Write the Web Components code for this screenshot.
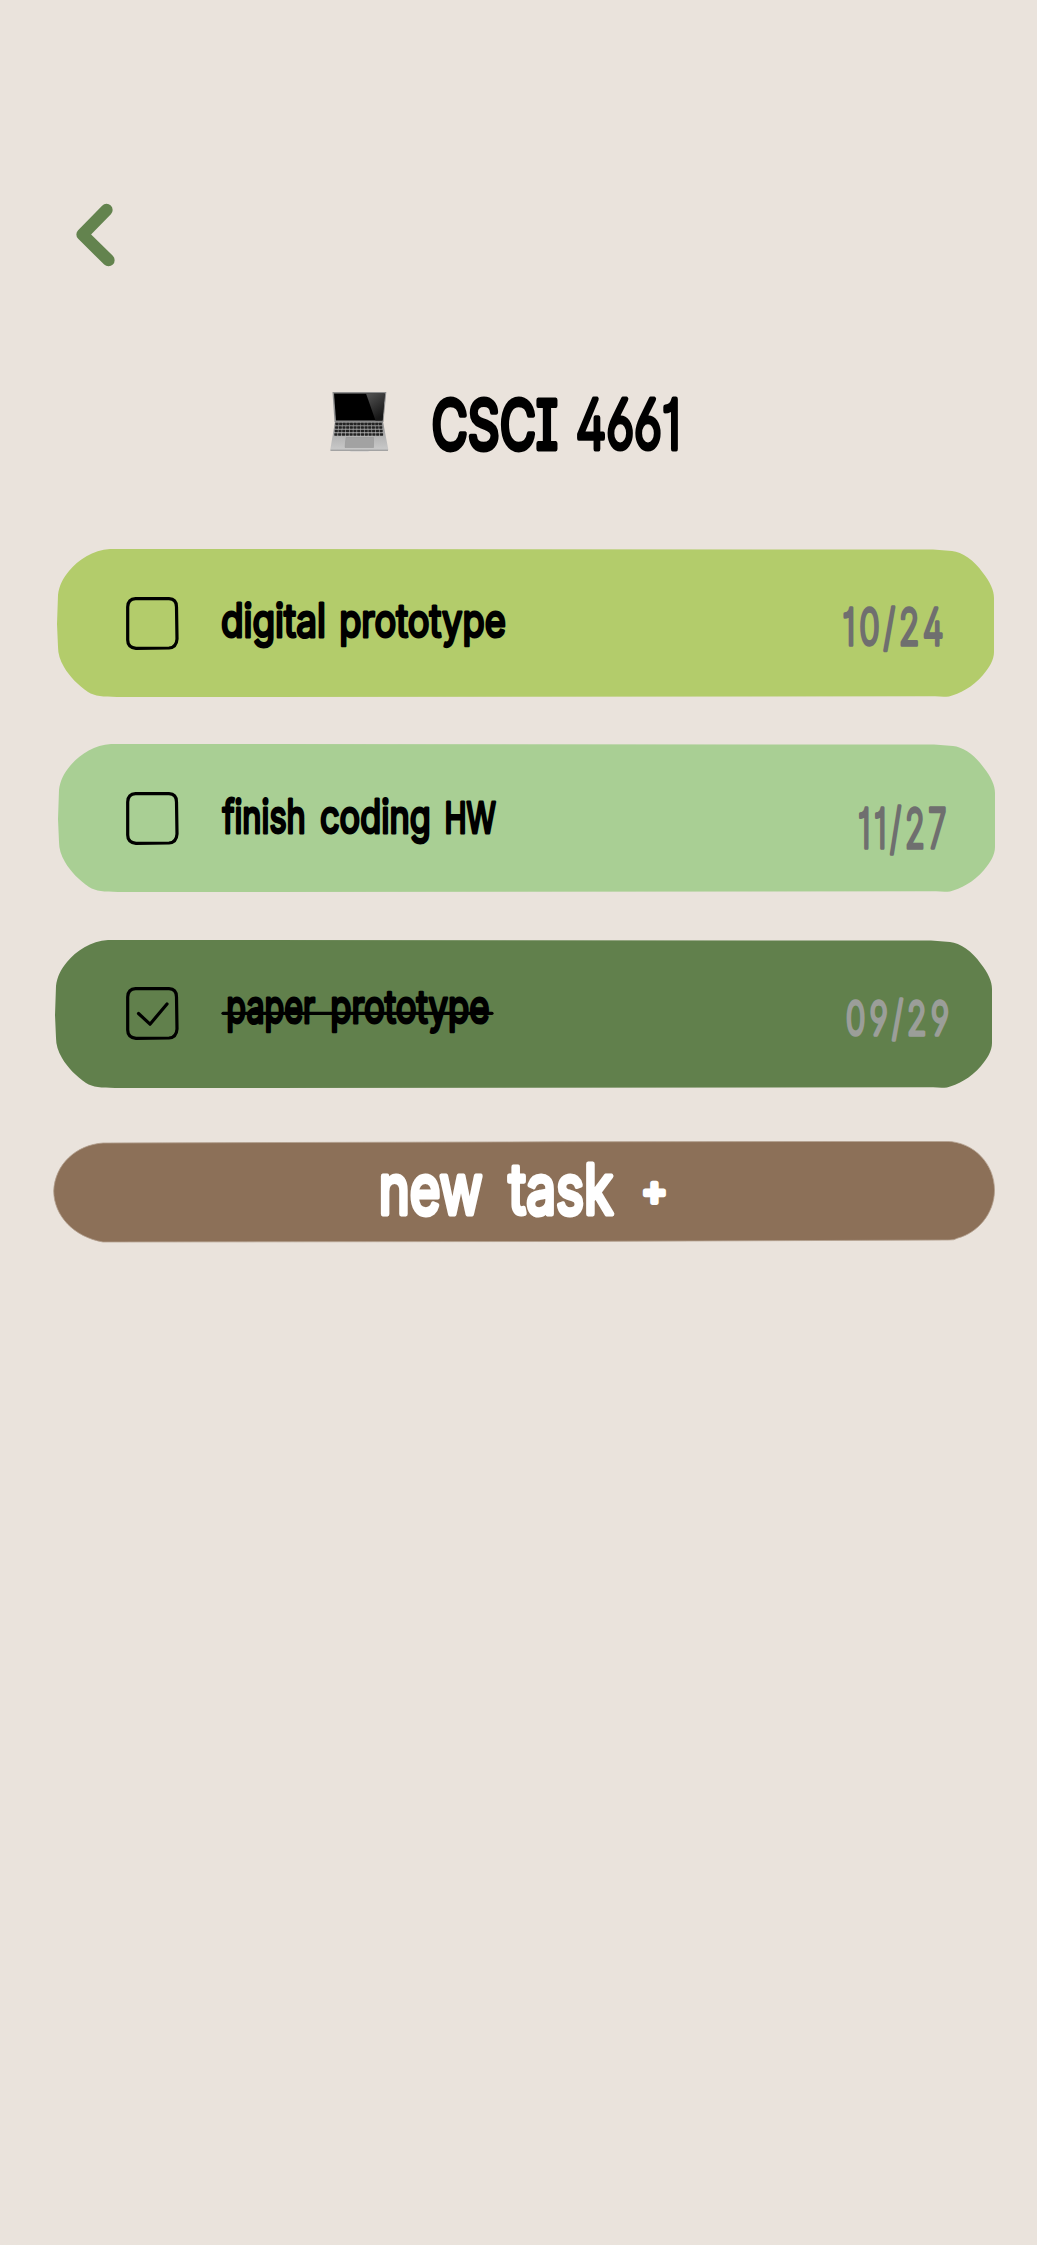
<!DOCTYPE html>
<html lang="en"><head><meta charset="utf-8"><title>CSCI 4661</title>
<style>
html,body{margin:0;background:#eae3dc}
body{font-family:Inter,"Open Sans",sans-serif}
</style></head><body>
<task-page></task-page>
<script>
// Condensed, round-cornered lettering. Each word is "text@left@width" in ink pixels,
// with an optional "@size@rise@weight@pen" after it.
class HandText extends HTMLElement{
  connectedCallback(){
    const root=this.attachShadow({mode:'open'});
    const g=(n,d)=>parseFloat(this.getAttribute(n)||d);
    const size=g('size',40),w=g('w',100),h=g('h',40),pen=g('pen',3),weight=g('weight',400),ls=g('spacing',0);
    const ctx=document.createElement('canvas').getContext('2d');
    const words=this.getAttribute('words').split('|').map(p=>{
      const [t,x,len,sz=size,rise=0,wt=weight,pn=pen]=p.split('@');
      ctx.font=`${wt} ${sz}px Inter`;
      const m=ctx.measureText(t);
      const ink=m.actualBoundingBoxRight+m.actualBoundingBoxLeft+(t.length-1)*ls;
      const s=(len-pn)/ink;
      return `<text transform="translate(${+x+pn/2+m.actualBoundingBoxLeft*s} ${h-pn/2-rise}) scale(${s} 1)" style="font-size:${sz}px;font-weight:${wt};stroke-width:${pn}px">${t}</text>`;
    }).join('\n');
    root.innerHTML=`<style>:host{display:block;flex:none;width:${w}px;height:${h}px}
      svg{display:block;overflow:visible}
      text{font-family:Inter,"Open Sans",sans-serif;letter-spacing:${ls}px;font-feature-settings:"cv01","cv02","cv03","cv04","cv08";fill:currentColor;stroke:currentColor;stroke-linejoin:round;stroke-linecap:round}</style>
      <svg width="${w}" height="${h}">${words}${this.hasAttribute('struck')?`<path d="M-4 17.300H265" fill="none" stroke="currentColor" stroke-width="3.200" stroke-linecap="round"/>`:''}</svg>`;
  }
}
customElements.define('hand-text',HandText);

class CheckBox extends HTMLElement{
  connectedCallback(){
    this.attachShadow({mode:'open'}).innerHTML=`<style>:host{display:block;flex:none;width:53px;height:53px}svg{display:block}</style>
    <svg width="53" height="53" fill="none" stroke="#000" stroke-width="3.200" stroke-linecap="round" stroke-linejoin="round">
    <path d="M9.500 1.700H43Q50.500 2 50.500 10L51 42Q50.500 50.500 43 51L10 51.300Q1.700 50.500 1.700 43V10Q2 2 9.500 1.700Z"/>
    ${this.hasAttribute('checked')?'<path d="M12.500 26.500L24 37.200L41 17"/>':''}</svg>`;
  }
}
customElements.define('check-box',CheckBox);

class TaskCard extends HTMLElement{
  connectedCallback(){
    this.attachShadow({mode:'open'}).innerHTML=`<style>
    :host{display:grid;width:937px;height:148px}
    svg,.row{grid-area:1/1}
    .row{display:flex;align-items:flex-start;justify-content:space-between}
    .left{display:flex;align-items:flex-start}
    </style>
    <svg width="937" height="148" fill="var(--fill)"><path d="M53 0L876 .5L895 2C905 3 917 11 926 24C933 33 937 41 937 49V103C937 111 932 119 926 126C916 138 902 145 892 147.500Q886 148 878 147.300L60 148C46 147.500 38 147.500 31 143C22 137 12 127 7 118C3 111 1 105 1 98L0 75L1 46C2 37 6 29 12 22C21 11 36 1 53 0Z"/></svg>
    <div class="row"><div class="left"><slot></slot></div><slot name="due"></slot></div>`;
  }
}
customElements.define('task-card',TaskCard);

class BackButton extends HTMLElement{
  connectedCallback(){
    this.attachShadow({mode:'open'}).innerHTML=`<style>:host{display:block;width:39px;height:63px}svg{display:block}</style>
    <svg width="39" height="64"><path d="M30.500 7L6.500 31.500L32.500 57.200" fill="none" stroke="#63834e" stroke-width="12.300" stroke-linecap="round" stroke-linejoin="round"/></svg>`;
  }
}
customElements.define('back-button',BackButton);

class LaptopIcon extends HTMLElement{
  connectedCallback(){
    let keys='';
    for(let r=0;r<4;r++){const y=30.800+r*3.450,l=5.500-r*.4,n=13,step=(47+r*.8)/n;
      for(let i=0;i<n;i++)keys+=`<rect x="${(l+i*step).toFixed(2)}" y="${y}" width="${(step-.6).toFixed(2)}" height="2.500" rx=".4"/>`;}
    this.attachShadow({mode:'open'}).innerHTML=`<style>:host{display:block;flex:none;width:59px;height:60px}svg{display:block}</style>
    <svg width="59" height="60"><defs>
    <linearGradient id="g" x1="0" y1="0" x2=".5" y2="1"><stop offset="0" stop-color="#555"/><stop offset="1" stop-color="#171717"/></linearGradient>
    <linearGradient id="b" x2="0" y2="1"><stop offset="0" stop-color="#858585"/><stop offset=".5" stop-color="#b4b4b4"/><stop offset="1" stop-color="#ccc"/></linearGradient></defs>
    <path d="M2.500 0H56.300L53.500 30H4.500Z" fill="#8e8e8e"/><path d="M4 1.500H54.800L52.500 28.500H6Z" fill="#000"/>
    <path d="M36 1.500H54.800L52.500 28.500H45.500Z" fill="url(#g)"/>
    <path d="M5 29.500H53L58.300 57.500Q58.300 59 57 59H39.500L38 59.600H21L19.500 59H1.500Q0 59 .3 57.500Z" fill="url(#b)"/>
    <g fill="#222">${keys}</g><path d="M16 45.500H43.500V55.500H15Z" fill="#a2a2a2" stroke="#929292" stroke-width=".5"/>
    <path d="M.5 58.200H58" stroke="#8b8b8b" stroke-width=".9"/></svg>`;
  }
}
customElements.define('laptop-icon',LaptopIcon);

class NewTask extends HTMLElement{
  connectedCallback(){
    this.attachShadow({mode:'open'}).innerHTML=`<style>:host{display:grid;width:942px;height:102px;color:#fff}
    svg,.label{grid-area:1/1}.label{display:flex;align-items:flex-start;padding:17px 0 0 328px}</style>
    <svg width="942" height="102"><path d="M50 2L500 .8L894 .4C921 1 941.500 23 941.500 49C941.500 73 924 92 905 97Q901 99.500 895 99L500 100.500L50 101C21 96 1 75 .7 50C2 23 23 4 50 2Z" fill="#8c7058" stroke="#b29f8e" stroke-width=".8"/></svg>
    <div class="label"><slot></slot></div>`;
  }
}
customElements.define('new-task',NewTask);

class TaskPage extends HTMLElement{
  connectedCallback(){
    this.attachShadow({mode:'open'}).innerHTML=`<style>
    :host{display:flex;flex-direction:column;box-sizing:border-box;width:1037px;height:2245px;padding-top:203px;color:#000;background:#eae3dc}
    back-button{margin-left:76px}
    header{display:flex;align-items:flex-start;gap:44px;margin:126px 0 0 330px;height:60px}
    header hand-text{margin-top:5px}
    task-card{margin-top:var(--gap);margin-left:var(--x)}
    check-box{margin:48px 0 0 var(--box)}
    check-box[checked]{margin-top:47px}
    new-task{margin:53px 0 0 53px}
    </style>
    <back-button></back-button>
    <header><laptop-icon></laptop-icon><hand-text w="246" h="54" size="68" pen="5" weight="400" words="CSCI@-1@116|4661@143@106@68@0@300@5"></hand-text></header>
    <task-card style="--fill:#b3cc6b;--gap:97px;--x:57px;--box:69px">
      <check-box></check-box><hand-text style="margin:51px 0 0 42px" w="285" h="38" size="46" pen="3" words="digital@0@104|prototype@119@166"></hand-text>
      <hand-text slot="due" style="margin:58px 52px 0 0;color:#6f6f6f" w="99" h="40" size="50" pen="3.600" weight="300" spacing="6" words="10/24@-1@102"></hand-text>
    </task-card>
    <task-card style="--fill:#a9cf94;--gap:47px;--x:58px;--box:68px">
      <check-box></check-box><hand-text style="margin:52px 0 0 42px" w="275" h="38" size="46" pen="3" words="finish@0@84|coding@99@110|HW@224@52@42"></hand-text>
      <hand-text slot="due" style="margin:62px 50px 0 0;color:#6f6f6f" w="86" h="44" size="55" pen="3.600" weight="300" spacing="6" words="11/27@-1@89"></hand-text>
    </task-card>
    <task-card style="--fill:#61804c;--gap:48px;--x:55px;--box:71px">
      <check-box checked></check-box><hand-text struck style="margin:56px 0 0 48px" w="262" h="28" size="45" pen="3" words="paper@0@89|prototype@104@159"></hand-text>
      <hand-text slot="due" style="margin:59px 43px 0 0;color:#9b9e99" w="102" h="38" size="47" pen="3.400" weight="300" spacing="6" words="09/29@-1@105"></hand-text>
    </task-card>
    <new-task><hand-text w="286" h="58" size="69" pen="5" words="new@-1@104|task@125@109|+@261@24@40@10@500"></hand-text></new-task>`;
  }
}
customElements.define('task-page',TaskPage);
</script></body></html>
